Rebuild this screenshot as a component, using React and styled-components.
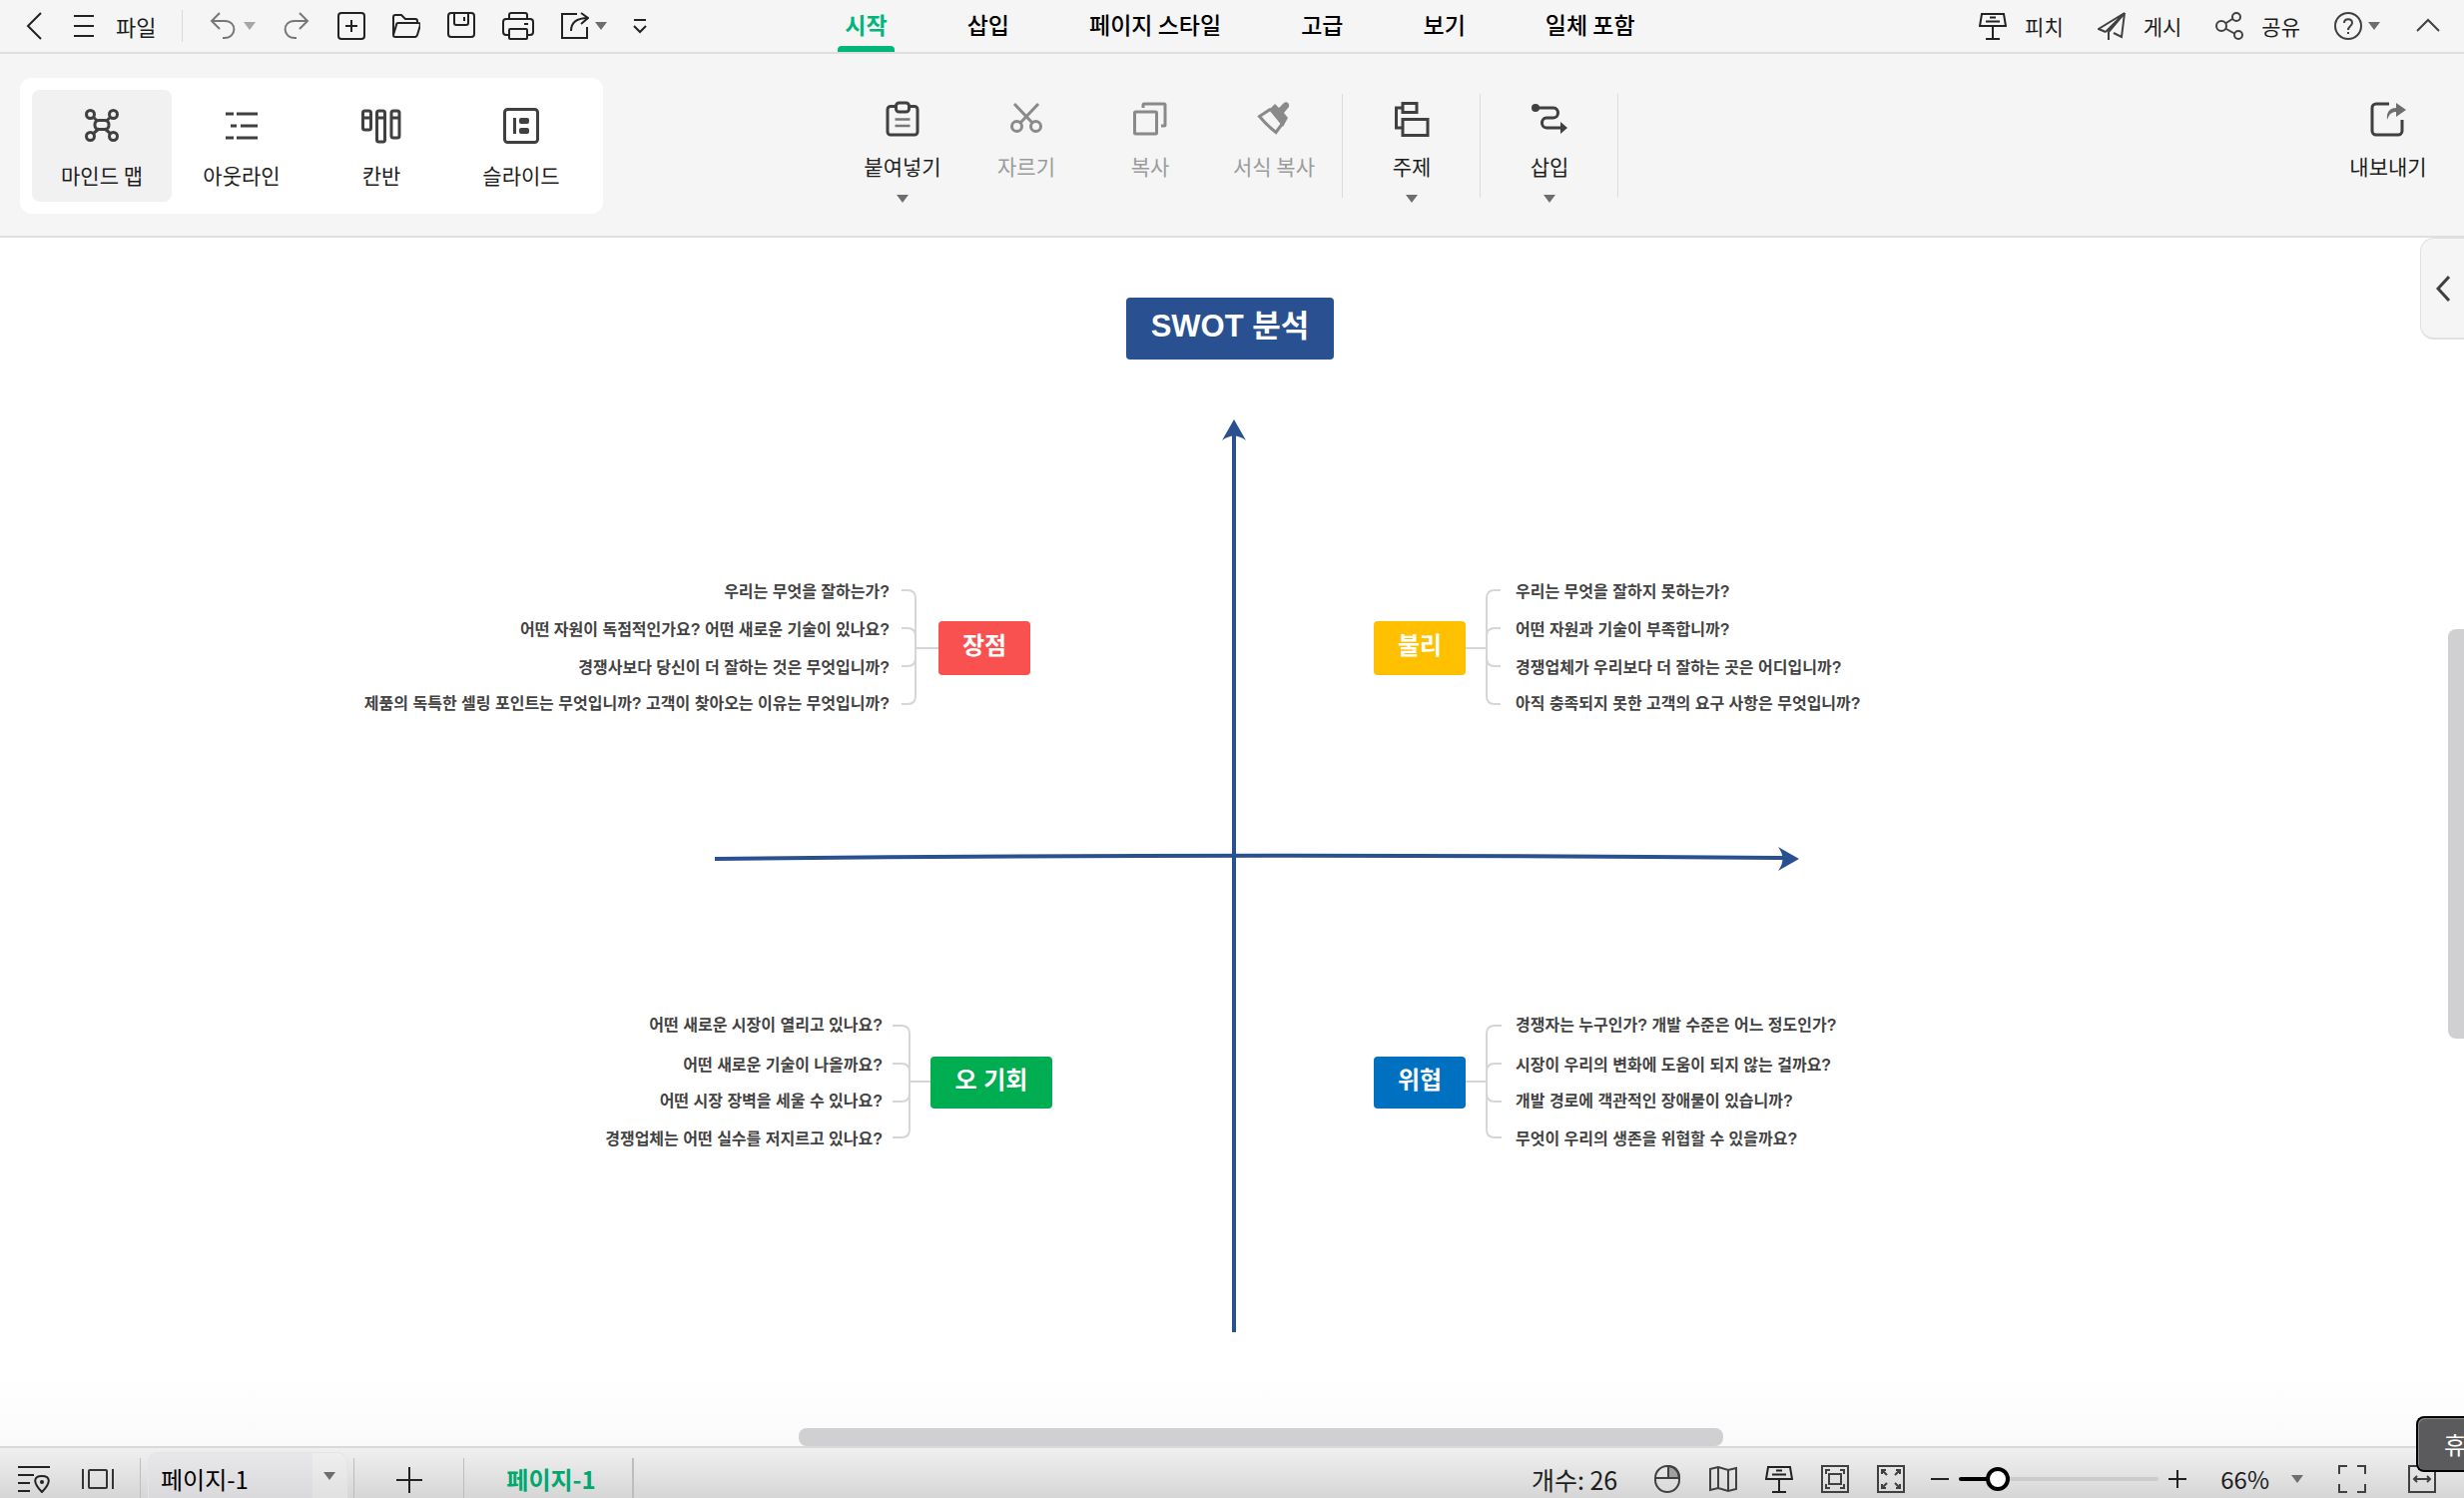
import React, { useState } from 'react'
import styled, { createGlobalStyle } from 'styled-components'

const GlobalStyle = createGlobalStyle`
    * {
        box-sizing: border-box;
    }
    body {
        margin: 0;
        background: #fff;
        color: #1d1d1d;
        font-family: "Noto Sans CJK KR", sans-serif;
        overflow: hidden;
    }
    button, select, input {
        font-family: inherit;
        color: inherit;
    }
`

const AppWrapper = styled.div`
    display: flex;
    flex-direction: column;
    height: 100vh;
`

const MenuBar = styled.header`
    display: grid;
    grid-template-columns: 1fr auto 1fr;
    align-items: center;
    height: 54px;
    padding: 0 22px 0 20px;
    background: #f5f5f5;
    border-bottom: 2px solid #dfdfdf;
`
const MenuGroup = styled.div`
    display: flex;
    align-items: center;
    gap: ${(props) => props.$gap || 27}px;
    justify-content: ${(props) => (props.$end ? 'flex-end' : 'flex-start')};
`
const PlainButton = styled.button`
    display: flex;
    align-items: center;
    gap: ${(props) => props.$gap || 6}px;
    padding: 0;
    border: none;
    background: none;
    font-size: ${(props) => props.$size || 21}px;
    line-height: 28px;
    white-space: nowrap;
    cursor: pointer;
`
const Divider = styled.span`
    width: 1px;
    height: 32px;
    background: #d9d9d9;
`
const Tabs = styled.nav`
    display: flex;
    align-self: stretch;
    gap: 66px;
    margin-left: 18px;
`
const Tab = styled.button`
    display: flex;
    flex-direction: column;
    align-items: center;
    justify-content: space-between;
    padding: 2px 7px 0;
    border: none;
    background: none;
    font-size: 23px;
    font-weight: ${(props) => (props.$active ? 700 : 500)};
    line-height: 44px;
    color: ${(props) => (props.$active ? '#00b67a' : '#000')};
    white-space: nowrap;
    cursor: pointer;
    &::after {
        content: '';
        align-self: stretch;
        height: 6px;
        margin: 0 -7px;
        border-radius: 4px 4px 0 0;
        background: ${(props) => (props.$active ? '#00b67a' : 'transparent')};
    }
`

const Ribbon = styled.div`
    display: grid;
    grid-template-columns: 1fr auto 1fr;
    align-items: start;
    height: 184px;
    padding: 24px 26px 0 20px;
    background: #f5f5f5;
    border-bottom: 2px solid #dfdfdf;
`
const ViewPanel = styled.div`
    display: flex;
    justify-self: start;
    padding: 12px;
    border-radius: 12px;
    background: #fff;
`
const ViewButton = styled.button`
    display: flex;
    flex-direction: column;
    align-items: center;
    gap: 14px;
    width: 140px;
    height: 112px;
    padding: 16px 0 0;
    border: none;
    border-radius: 8px;
    background: ${(props) => (props.$active ? '#f1f1f1' : 'transparent')};
    font-size: 21px;
    line-height: 30px;
    cursor: pointer;
`
const Tools = styled.div`
    display: flex;
    margin-left: 8px;
    padding-top: 16px;
`
const ToolButton = styled.button`
    display: flex;
    flex-direction: column;
    align-items: center;
    gap: 14px;
    width: ${(props) => props.$width || 124}px;
    padding: 7px 0 0;
    border: none;
    background: none;
    font-size: 21px;
    line-height: 30px;
    color: ${(props) => (props.disabled ? '#9b9b9b' : '#1d1d1d')};
    cursor: pointer;
`
const ToolDivider = styled.span`
    width: 1px;
    height: 104px;
    margin: 0 7px 0 6px;
    background: #dcdcdc;
`
const ExportSlot = styled.div`
    justify-self: end;
    padding-top: 16px;
`

const Canvas = styled.main`
    position: relative;
    flex: 1;
    min-height: 0;
    overflow: hidden;
    background: linear-gradient(#fff 94%, #fafafa);
`
const Stage = styled.div`
    position: relative;
    width: 1760px;
    height: 1120px;
    margin: 2px auto 0;
`
const Lines = styled.svg`
    position: absolute;
    left: 0;
    top: 0;
`
const Topic = styled.div`
    position: absolute;
    left: ${(props) => props.$x}px;
    top: ${(props) => props.$y}px;
    width: ${(props) => props.$w}px;
    height: ${(props) => props.$h}px;
    border-radius: 4px;
    background: ${(props) => props.$color};
    color: #fff;
    font-family: "Liberation Sans", "Noto Sans CJK KR", sans-serif;
    font-size: ${(props) => props.$size || 24}px;
    font-weight: 700;
    line-height: ${(props) => props.$h - 4}px;
    text-align: center;
    white-space: nowrap;
`
const Question = styled.div`
    position: absolute;
    top: ${(props) => props.$y - 11}px;
    ${(props) => (props.$side === 'left' ? 'right' : 'left')}: ${(props) => props.$x}px;
    font-family: "Liberation Sans", "Noto Sans CJK KR", sans-serif;
    font-size: 16px;
    font-weight: 700;
    line-height: 24px;
    color: #434343;
    white-space: nowrap;
`
const PanelHandle = styled.button`
    position: absolute;
    right: 0;
    top: 0;
    display: flex;
    align-items: center;
    justify-content: center;
    width: 44px;
    height: 102px;
    padding: 0;
    border: 2px solid #e0e0e0;
    border-width: 1px 0 2px 1px;
    border-radius: 14px 0 0 14px;
    background: #f5f5f5;
    cursor: pointer;
`
const HorizontalThumb = styled.div`
    position: absolute;
    left: calc(32% + 10px);
    right: calc(30% + 2px);
    bottom: 0;
    height: 18px;
    border-radius: 8px;
    background: #d0d0d2;
`
const VerticalThumb = styled.div`
    position: absolute;
    right: 0;
    top: calc(32% + 5px);
    bottom: calc(34% - 3px);
    width: 16px;
    border-radius: 8px 0 0 8px;
    background: #d0d0d2;
`
const Tooltip = styled.div`
    position: fixed;
    right: 0;
    bottom: 26px;
    width: 48px;
    height: 56px;
    padding-left: 26px;
    overflow: hidden;
    border: 2px solid #000;
    border-right: none;
    border-radius: 8px 0 0 8px;
    background: #5b5b5d;
    box-shadow: inset 1px 1px 0 #8a8a8a;
    font-size: 24px;
    line-height: 52px;
    color: #fff;
`

const StatusBar = styled.footer`
    display: flex;
    justify-content: space-between;
    height: 52px;
    padding: 0 28px 0 18px;
    border-top: 2px solid #d9d9d9;
    background: linear-gradient(#f0f0f0, #d6d6d6);
`
const StatusLeft = styled.div`
    display: flex;
    padding-top: 4px;
`
const StatusIcons = styled.div`
    display: flex;
    align-items: center;
    gap: 32px;
    padding: 8px 26px 0 0;
`
const StatusDivider = styled.span`
    width: ${(props) => props.$width || 1}px;
    margin-top: 6px;
    background: #bdbdbd;
`
const PageSelectBox = styled.div`
    display: flex;
    align-items: center;
    width: 200px;
    margin: 0 6px 0 7px;
    padding-right: 11px;
    border: 1px solid #e4e4e6;
    border-bottom: none;
    border-radius: 10px 10px 0 0;
    background: linear-gradient(90deg, #dfdfe466 83%, #f0f0f066 83%);
`
const PageSelect = styled.select`
    appearance: none;
    flex: 1;
    min-width: 0;
    height: 40px;
    margin-top: 6px;
    padding: 0 0 0 12px;
    border: none;
    background: none;
    font-size: 24px;
    color: #000;
`
const AddPage = styled.button`
    display: flex;
    align-items: center;
    justify-content: center;
    width: 109px;
    padding: 9px 0 0;
    border: none;
    background: none;
    cursor: pointer;
`
const PageTab = styled.button`
    width: 168px;
    padding: 7px 0 0 6px;
    border: none;
    background: none;
    font-size: 24px;
    font-weight: 700;
    color: #00a870;
    cursor: pointer;
`
const StatusRight = styled.div`
    display: flex;
    align-items: center;
    gap: 28px;
    padding-top: 12px;
`
const Count = styled.span`
    margin-right: 8px;
    font-size: 25px;
    line-height: 36px;
`
const ZoomControl = styled.div`
    display: flex;
    align-items: center;
    gap: 10px;
    margin: 0 6px 0 -2px;
`
const ScreenButtons = styled.div`
    display: flex;
    gap: 42px;
    margin-left: 7px;
`
const ZoomSlider = styled.input`
    appearance: none;
    width: 200px;
    height: 24px;
    margin: 0;
    background: none;
    &::-webkit-slider-runnable-track {
        height: 4px;
        border-radius: 2px;
        background: linear-gradient(90deg, #000 ${(props) => props.value}%, #cbcbcb ${(props) => props.value}%);
    }
    &::-webkit-slider-thumb {
        appearance: none;
        width: 24px;
        height: 24px;
        margin-top: -10px;
        border: 4px solid #000;
        border-radius: 50%;
        background: #fff;
    }
`

function Icon({ size = 28, w, h, stroke = '#222', sw = 2, label, children }) {
    const width = w || size
    const height = h || size
    return (
        <svg
            width={width}
            height={height}
            viewBox={`0 0 ${width} ${height}`}
            fill="none"
            stroke={stroke}
            strokeWidth={sw}
            role={label ? 'img' : undefined}
            aria-label={label}
            aria-hidden={label ? undefined : true}
        >
            {children}
        </svg>
    )
}

function Caret({ color = '#6e6e6e' }) {
    return (
        <Icon w={12} h={8} stroke="none">
            <path d="M0 0h12L6 8z" fill={color} />
        </Icon>
    )
}

function PitchIcon() {
    return (
        <Icon>
            <path d="M3 2h22l2 12H1zM14 14v13M7 27h14M7 9.5h14M11 5.5h6" />
        </Icon>
    )
}

const tabs = ['시작', '삽입', '페이지 스타일', '고급', '보기', '일체 포함']

const views = [
    {
        name: '마인드 맵',
        icon: (
            <Icon size={40} stroke="#404040" sw={3}>
                <circle cx="8.5" cy="8.5" r="4" />
                <circle cx="31.5" cy="8.500" r="4" />
                <circle cx="8.5" cy="30.5" r="4" />
                <circle cx="31.5" cy="30.5" r="4" />
                <rect x="13" y="14.5" width="14" height="9" rx="4" />
                <path d="M11 11l5 4.500M29 11l-5 4.500M11 28l6-5M29 28l-6-5" />
            </Icon>
        ),
    },
    {
        name: '아웃라인',
        icon: (
            <Icon size={40} stroke="#404040" sw={3}>
                <path d="M4 8h8M15 8h21M9 20h6M19 20h17M4 32h8M15 32h21" />
            </Icon>
        ),
    },
    {
        name: '칸반',
        icon: (
            <Icon size={40} stroke="#404040" sw={3}>
                <rect x="1.5" y="5" width="8" height="19" rx="2" />
                <rect x="15.5" y="5" width="8" height="31" rx="2" />
                <rect x="30" y="5" width="8" height="27" rx="2" />
                <path d="M2 12h8M16 12h8M30 12h8" />
            </Icon>
        ),
    },
    {
        name: '슬라이드',
        icon: (
            <Icon size={40} stroke="#404040" sw={3}>
                <rect x="3.5" y="3.5" width="33" height="33" rx="3" />
                <path d="M13.5 12v16" />
                <rect x="18" y="12" width="10" height="6" rx="2" fill="#404040" stroke="none" />
                <rect x="18" y="22" width="10" height="6" rx="2" fill="#404040" stroke="none" />
            </Icon>
        ),
    },
]

const tools = [
    {
        name: '붙여넣기',
        caret: true,
        icon: (
            <Icon size={36} stroke="#404040" sw={3}>
                <path d="M12 5.5H6a3 3 0 0 0-3 3V31a3 3 0 0 0 3 3h24a3 3 0 0 0 3-3V8.5a3 3 0 0 0-3-3h-6" />
                <rect x="11.5" y="2" width="13" height="9" rx="3" />
                <path d="M10.5 18.5h15M10.5 25h15" stroke="#777" strokeWidth="2.5" />
            </Icon>
        ),
    },
    {
        name: '자르기',
        disabled: true,
        icon: (
            <Icon size={36} stroke="#8a8a8a" sw={3}>
                <circle cx="8.5" cy="25.500" r="5" />
                <circle cx="27.5" cy="25.500" r="5" />
                <path d="M6 3l18 19M30 3L12 22" />
            </Icon>
        ),
    },
    {
        name: '복사',
        disabled: true,
        icon: (
            <Icon size={36} stroke="#8a8a8a" sw={3}>
                <rect x="2.5" y="11" width="22" height="22" rx="1" />
                <path d="M11 7V4a1 1 0 0 1 1-1h20a1 1 0 0 1 1 1v20a1 1 0 0 1-1 1h-3" />
            </Icon>
        ),
    },
    {
        name: '서식 복사',
        disabled: true,
        icon: (
            <Icon size={36} stroke="#8a8a8a" sw={3}>
                <path d="M15 8L3.500 15.500C8 21 13 26 20 31.500L27 22" />
                <path d="M13 9l6-6 4 4 5-5c3-2 6 1 5 4l-5 6 4 5-5 9z" fill="#8a8a8a" stroke="none" />
            </Icon>
        ),
    },
    {
        name: '주제',
        caret: true,
        divider: true,
        icon: (
            <Icon size={36} stroke="#404040" sw={3}>
                <rect x="9" y="2.5" width="14" height="9" />
                <path d="M9 7H2.5v20H9" />
                <rect x="9" y="18.500" width="25" height="16" />
            </Icon>
        ),
    },
    {
        name: '삽입',
        caret: true,
        divider: true,
        icon: (
            <Icon size={36} stroke="#404040" sw={3}>
                <circle cx="4" cy="7" r="4" fill="#404040" stroke="none" />
                <path d="M4 7h18c6 0 6 10 0 10h-7c-6 0-6 10 0 10h17" />
                <path d="M29 21l7 6-7 6z" fill="#404040" stroke="none" />
            </Icon>
        ),
    },
]

// x is the inner edge of the texts: from the right for left branches, from the left for the others
const branches = [
    {
        name: '장점',
        color: '#f85150',
        box: { $x: 586, $y: 382, $w: 92, $h: 54 },
        side: 'left',
        x: 1223,
        questions: [
            [352, '우리는 무엇을 잘하는가?'],
            [390, '어떤 자원이 독점적인가요? 어떤 새로운 기술이 있나요?'],
            [428, '경쟁사보다 당신이 더 잘하는 것은 무엇입니까?'],
            [464, '제품의 독특한 셀링 포인트는 무엇입니까? 고객이 찾아오는 이유는 무엇입니까?'],
        ],
    },
    {
        name: '불리',
        color: '#ffc000',
        box: { $x: 1022, $y: 382, $w: 92, $h: 54 },
        side: 'right',
        x: 1164,
        questions: [
            [352, '우리는 무엇을 잘하지 못하는가?'],
            [390, '어떤 자원과 기술이 부족합니까?'],
            [428, '경쟁업체가 우리보다 더 잘하는 곳은 어디입니까?'],
            [464, '아직 충족되지 못한 고객의 요구 사항은 무엇입니까?'],
        ],
    },
    {
        name: '오 기회',
        color: '#00ad50',
        box: { $x: 578, $y: 818, $w: 122, $h: 52 },
        side: 'left',
        x: 1230,
        questions: [
            [786, '어떤 새로운 시장이 열리고 있나요?'],
            [826, '어떤 새로운 기술이 나올까요?'],
            [862, '어떤 시장 장벽을 세울 수 있나요?'],
            [900, '경쟁업체는 어떤 실수를 저지르고 있나요?'],
        ],
    },
    {
        name: '위협',
        color: '#0070c0',
        box: { $x: 1022, $y: 818, $w: 92, $h: 52 },
        side: 'right',
        x: 1164,
        questions: [
            [786, '경쟁자는 누구인가? 개발 수준은 어느 정도인가?'],
            [826, '시장이 우리의 변화에 도움이 되지 않는 걸까요?'],
            [862, '개발 경로에 객관적인 장애물이 있습니까?'],
            [900, '무엇이 우리의 생존을 위협할 수 있을까요?'],
        ],
    },
]

const connectors = [
    { tip: 549, trunk: 563, box: 586, stem: 409, ys: [351, 389, 427, 465] },
    { tip: 1149, trunk: 1135, box: 1114, stem: 409, ys: [351, 389, 427, 465] },
    { tip: 540, trunk: 557, box: 578, stem: 843, ys: [787, 825, 863, 899] },
    { tip: 1150, trunk: 1135, box: 1114, stem: 843, ys: [787, 825, 863, 899] },
]

function connectorPath({ tip, trunk, box, stem, ys }) {
    const r = trunk > tip ? 8 : -8
    const arms = ys.map((y) => {
        const bend = y < stem ? 8 : -8
        return `M${tip} ${y}H${trunk - r}Q${trunk} ${y} ${trunk} ${y + bend}V${stem}`
    })
    return arms.join('') + `M${trunk} ${stem}H${box}`
}

function MindMap() {
    return (
        <Stage>
            <Lines width="1760" height="1120" fill="none" aria-hidden="true">
                {connectors.map((item, i) => (
                    <path key={i} d={connectorPath(item)} stroke="#d6d6d6" strokeWidth="2" />
                ))}
                <path d="M882 196V1094" stroke="#295191" strokeWidth="4" />
                <path d="M882 180L894 201Q882 192 870 201z" fill="#295191" />
                <path d="M362 620Q882 614 1434 619" stroke="#295191" strokeWidth="4" />
                <path d="M1448 620L1427 608Q1436 620 1427 632z" fill="#295191" />
            </Lines>
            <Topic $x={774} $y={58} $w={208} $h={62} $color="#295191" $size={31}>
                SWOT 분석
            </Topic>
            {branches.map((branch) => (
                <React.Fragment key={branch.name}>
                    <Topic {...branch.box} $color={branch.color}>
                        {branch.name}
                    </Topic>
                    {branch.questions.map(([y, text]) => (
                        <Question key={text} $y={y} $x={branch.x} $side={branch.side}>
                            {text}
                        </Question>
                    ))}
                </React.Fragment>
            ))}
        </Stage>
    )
}

function App() {
    const [tab, setTab] = useState('시작')
    const [view, setView] = useState('마인드 맵')
    const [zoom, setZoom] = useState(15)

    return (
        <AppWrapper>
            <GlobalStyle />
            <MenuBar>
                <MenuGroup>
                    <MenuGroup $gap={26}>
                        <PlainButton aria-label="뒤로">
                            <Icon><path d="M21 1L8 14l13 13" /></Icon>
                        </PlainButton>
                        <PlainButton $gap={22} $size={22}>
                            <Icon w={20} h={28}><path d="M0 4h20M0 14h20M0 24h20" /></Icon>
                            파일
                        </PlainButton>
                        <Divider />
                    </MenuGroup>
                    <PlainButton aria-label="실행 취소">
                        <Icon stroke="#777"><path d="M10 1L2 9l8 8M2 9h13c13 0 12 17 0 17h-2" /></Icon>
                        <Caret color="#a6a6a6" />
                    </PlainButton>
                    <PlainButton aria-label="다시 실행">
                        <Icon stroke="#777"><path d="M17 1l8 8-8 8M25 9H12c-13 0-12 17 0 17h2" /></Icon>
                    </PlainButton>
                    <PlainButton aria-label="새로 만들기">
                        <Icon>
                            <rect x="1" y="1" width="26" height="26" rx="3" />
                            <path d="M14 8v12M8 14h12" />
                        </Icon>
                    </PlainButton>
                    <PlainButton aria-label="열기">
                        <Icon>
                            <path d="M1 23V5a2 2 0 0 1 2-2h6l4 4h10a2 2 0 0 1 2 2v2M1 23l3-10a2 2 0 0 1 2-2h20c2 0 2 1 2 2l-3 10a3 3 0 0 1-2 2H3a2 2 0 0 1-2-2z" />
                        </Icon>
                    </PlainButton>
                    <PlainButton aria-label="저장">
                        <Icon>
                            <path d="M4 1h20a3 3 0 0 1 3 3v18a3 3 0 0 1-3 3H4a3 3 0 0 1-3-3V4a3 3 0 0 1 3-3zM7 1v10a2 2 0 0 0 2 2h10a2 2 0 0 0 2-2V1M17 5v4" />
                        </Icon>
                    </PlainButton>
                    <PlainButton aria-label="인쇄">
                        <Icon w={32} h={28}>
                            <path d="M7 7V3a2 2 0 0 1 2-2h14a2 2 0 0 1 2 2v4M7 23H4a3 3 0 0 1-3-3V10a3 3 0 0 1 3-3h24a3 3 0 0 1 3 3v10a3 3 0 0 1-3 3h-3M22 12h4" />
                            <rect x="7" y="17" width="18" height="10" rx="1" />
                        </Icon>
                    </PlainButton>
                    <MenuGroup $gap={26}>
                        <PlainButton aria-label="내보내기 옵션">
                            <Icon>
                                <path d="M16 2H1v24h25V15M10 19c0-8 5-13 17-13M20 1l7 5-7 6" />
                            </Icon>
                            <Caret />
                        </PlainButton>
                        <PlainButton aria-label="더 보기">
                            <Icon w={14} h={16}><path d="M1 2h12M1 8l6 6 6-6" /></Icon>
                        </PlainButton>
                    </MenuGroup>
                </MenuGroup>
                <Tabs>
                    {tabs.map((name) => (
                        <Tab key={name} $active={tab === name} onClick={() => setTab(name)}>
                            {name}
                        </Tab>
                    ))}
                </Tabs>
                <MenuGroup $gap={34} $end>
                    <PlainButton $gap={18}>
                        <PitchIcon />
                        피치
                    </PlainButton>
                    <PlainButton $gap={18}>
                        <Icon stroke="#404040">
                            <path d="M27 1L1 17l7 3M27 1l-3 24-8-4M27 1L11 20v8M27 1L8 20" />
                        </Icon>
                        게시
                    </PlainButton>
                    <PlainButton $gap={18}>
                        <Icon stroke="#404040">
                            <circle cx="6" cy="14" r="5" />
                            <circle cx="21" cy="5" r="4" />
                            <circle cx="23" cy="23" r="4" />
                            <path d="M10 11.5l7-4.5M10 16.5l9 5" />
                        </Icon>
                        공유
                    </PlainButton>
                    <PlainButton aria-label="도움말">
                        <Icon stroke="#404040">
                            <circle cx="14" cy="14" r="13" />
                            <path d="M10 11c0-5 8-5 8 0 0 3-4 3-4 7M14 20v2" />
                        </Icon>
                        <Caret />
                    </PlainButton>
                    <PlainButton aria-label="리본 접기">
                        <Icon stroke="#404040"><path d="M3 19L14 8l11 11" /></Icon>
                    </PlainButton>
                </MenuGroup>
            </MenuBar>

            <Ribbon>
                <ViewPanel>
                    {views.map(({ name, icon }) => (
                        <ViewButton key={name} $active={view === name} onClick={() => setView(name)}>
                            {icon}
                            {name}
                        </ViewButton>
                    ))}
                </ViewPanel>
                <Tools>
                    {tools.map(({ name, icon, caret, disabled, divider }) => (
                        <React.Fragment key={name}>
                            {divider && <ToolDivider />}
                            <ToolButton disabled={disabled}>
                                {icon}
                                {name}
                                {caret && <Caret />}
                            </ToolButton>
                        </React.Fragment>
                    ))}
                    <ToolDivider />
                </Tools>
                <ExportSlot>
                    <ToolButton $width={100}>
                        <Icon size={36} stroke="#404040" sw={3}>
                            <path d="M19 3H6a4 4 0 0 0-4 4v23a4 4 0 0 0 4 4h22a4 4 0 0 0 4-4V19" />
                            <path d="M17 19C16 11 20 7 26 7V2l10 7-10 7v-5c-4 0-7 2-9 8z" fill="#6e6e6e" stroke="none" />
                        </Icon>
                        내보내기
                    </ToolButton>
                </ExportSlot>
            </Ribbon>

            <Canvas>
                <MindMap />
                <PanelHandle aria-label="패널 열기">
                    <Icon w={14} h={26} stroke="#404040" sw={3}><path d="M13 1L2 13l11 12" /></Icon>
                </PanelHandle>
                <HorizontalThumb />
                <VerticalThumb />
            </Canvas>

            <StatusBar>
                <StatusLeft>
                    <StatusIcons>
                        <Icon w={32} h={28} label="개요 탐색">
                            <path d="M0 2h32M0 10h16M0 18h12M0 26h12M24 27c-10-10-8-16 0-16s10 6 0 16z" />
                            <circle cx="24" cy="17" r="2" fill="#222" stroke="none" />
                        </Icon>
                        <Icon w={32} h={28} stroke="#333" label="페이지 보기">
                            <path d="M1 4v20M31 4v20" />
                            <rect x="7" y="5" width="18" height="18" rx="1" />
                        </Icon>
                    </StatusIcons>
                    <StatusDivider />
                    <PageSelectBox>
                        <PageSelect aria-label="페이지">
                            <option>페이지-1</option>
                        </PageSelect>
                        <Caret />
                    </PageSelectBox>
                    <StatusDivider />
                    <AddPage aria-label="페이지 추가">
                        <Icon size={26}><path d="M0 13h26M13 0v26" /></Icon>
                    </AddPage>
                    <StatusDivider />
                    <PageTab>페이지-1</PageTab>
                    <StatusDivider $width={2} />
                </StatusLeft>
                <StatusRight>
                    <Count>개수: 26</Count>
                    <Icon stroke="#404040">
                        <path d="M14 1h1v12H26c0-7-4-12-11-12z" fill="#a0a0a0" />
                        <rect x="2" y="1" width="24" height="26" rx="12" />
                        <path d="M2 13h24" />
                    </Icon>
                    <Icon stroke="#404040">
                        <path d="M1 4l8-2 10 3 8-2v21l-8 2-10-3-8 2zM9 2v21M19 5v21" />
                    </Icon>
                    <PitchIcon />
                    <Icon stroke="#404040">
                        <rect x="1" y="1" width="26" height="26" />
                        <rect x="8" y="9" width="12" height="10" />
                        <path d="M5 9V5h4M19 5h4v4M23 19v4h-4M9 23H5v-4" />
                    </Icon>
                    <Icon stroke="#404040">
                        <rect x="1" y="1" width="26" height="26" />
                        <path d="M5 9V5h4M19 5h4v4M23 19v4h-4M9 23H5v-4M5 5l5 5M23 5l-5 5M23 23l-5-5M5 23l5-5" />
                    </Icon>
                    <ZoomControl>
                        <PlainButton aria-label="축소" onClick={() => setZoom(Math.max(0, zoom - 2))}>
                            <Icon size={18}><path d="M0 9h18" /></Icon>
                        </PlainButton>
                        <ZoomSlider
                            type="range"
                            aria-label="확대/축소"
                            min="0"
                            max="100"
                            value={zoom}
                            onChange={(e) => setZoom(Number(e.target.value))}
                        />
                        <PlainButton aria-label="확대" onClick={() => setZoom(Math.min(100, zoom + 2))}>
                            <Icon size={18}><path d="M0 9h18M9 0v18" /></Icon>
                        </PlainButton>
                    </ZoomControl>
                    <PlainButton $size={24} $gap={22}>
                        66%
                        <Caret />
                    </PlainButton>
                    <ScreenButtons>
                        <PlainButton aria-label="전체 화면">
                            <Icon stroke="#404040">
                                <path d="M1 9V1h8M19 1h8v8M27 19v8h-8M9 27H1v-8" />
                            </Icon>
                        </PlainButton>
                        <PlainButton aria-label="너비 맞춤">
                            <Icon stroke="#404040">
                                <path d="M1 1h26v26H1zM6 14h16M9 11l-3 3 3 3M19 11l3 3-3 3" />
                            </Icon>
                        </PlainButton>
                    </ScreenButtons>
                </StatusRight>
            </StatusBar>
            <Tooltip>휴</Tooltip>
        </AppWrapper>
    )
}

export default App
